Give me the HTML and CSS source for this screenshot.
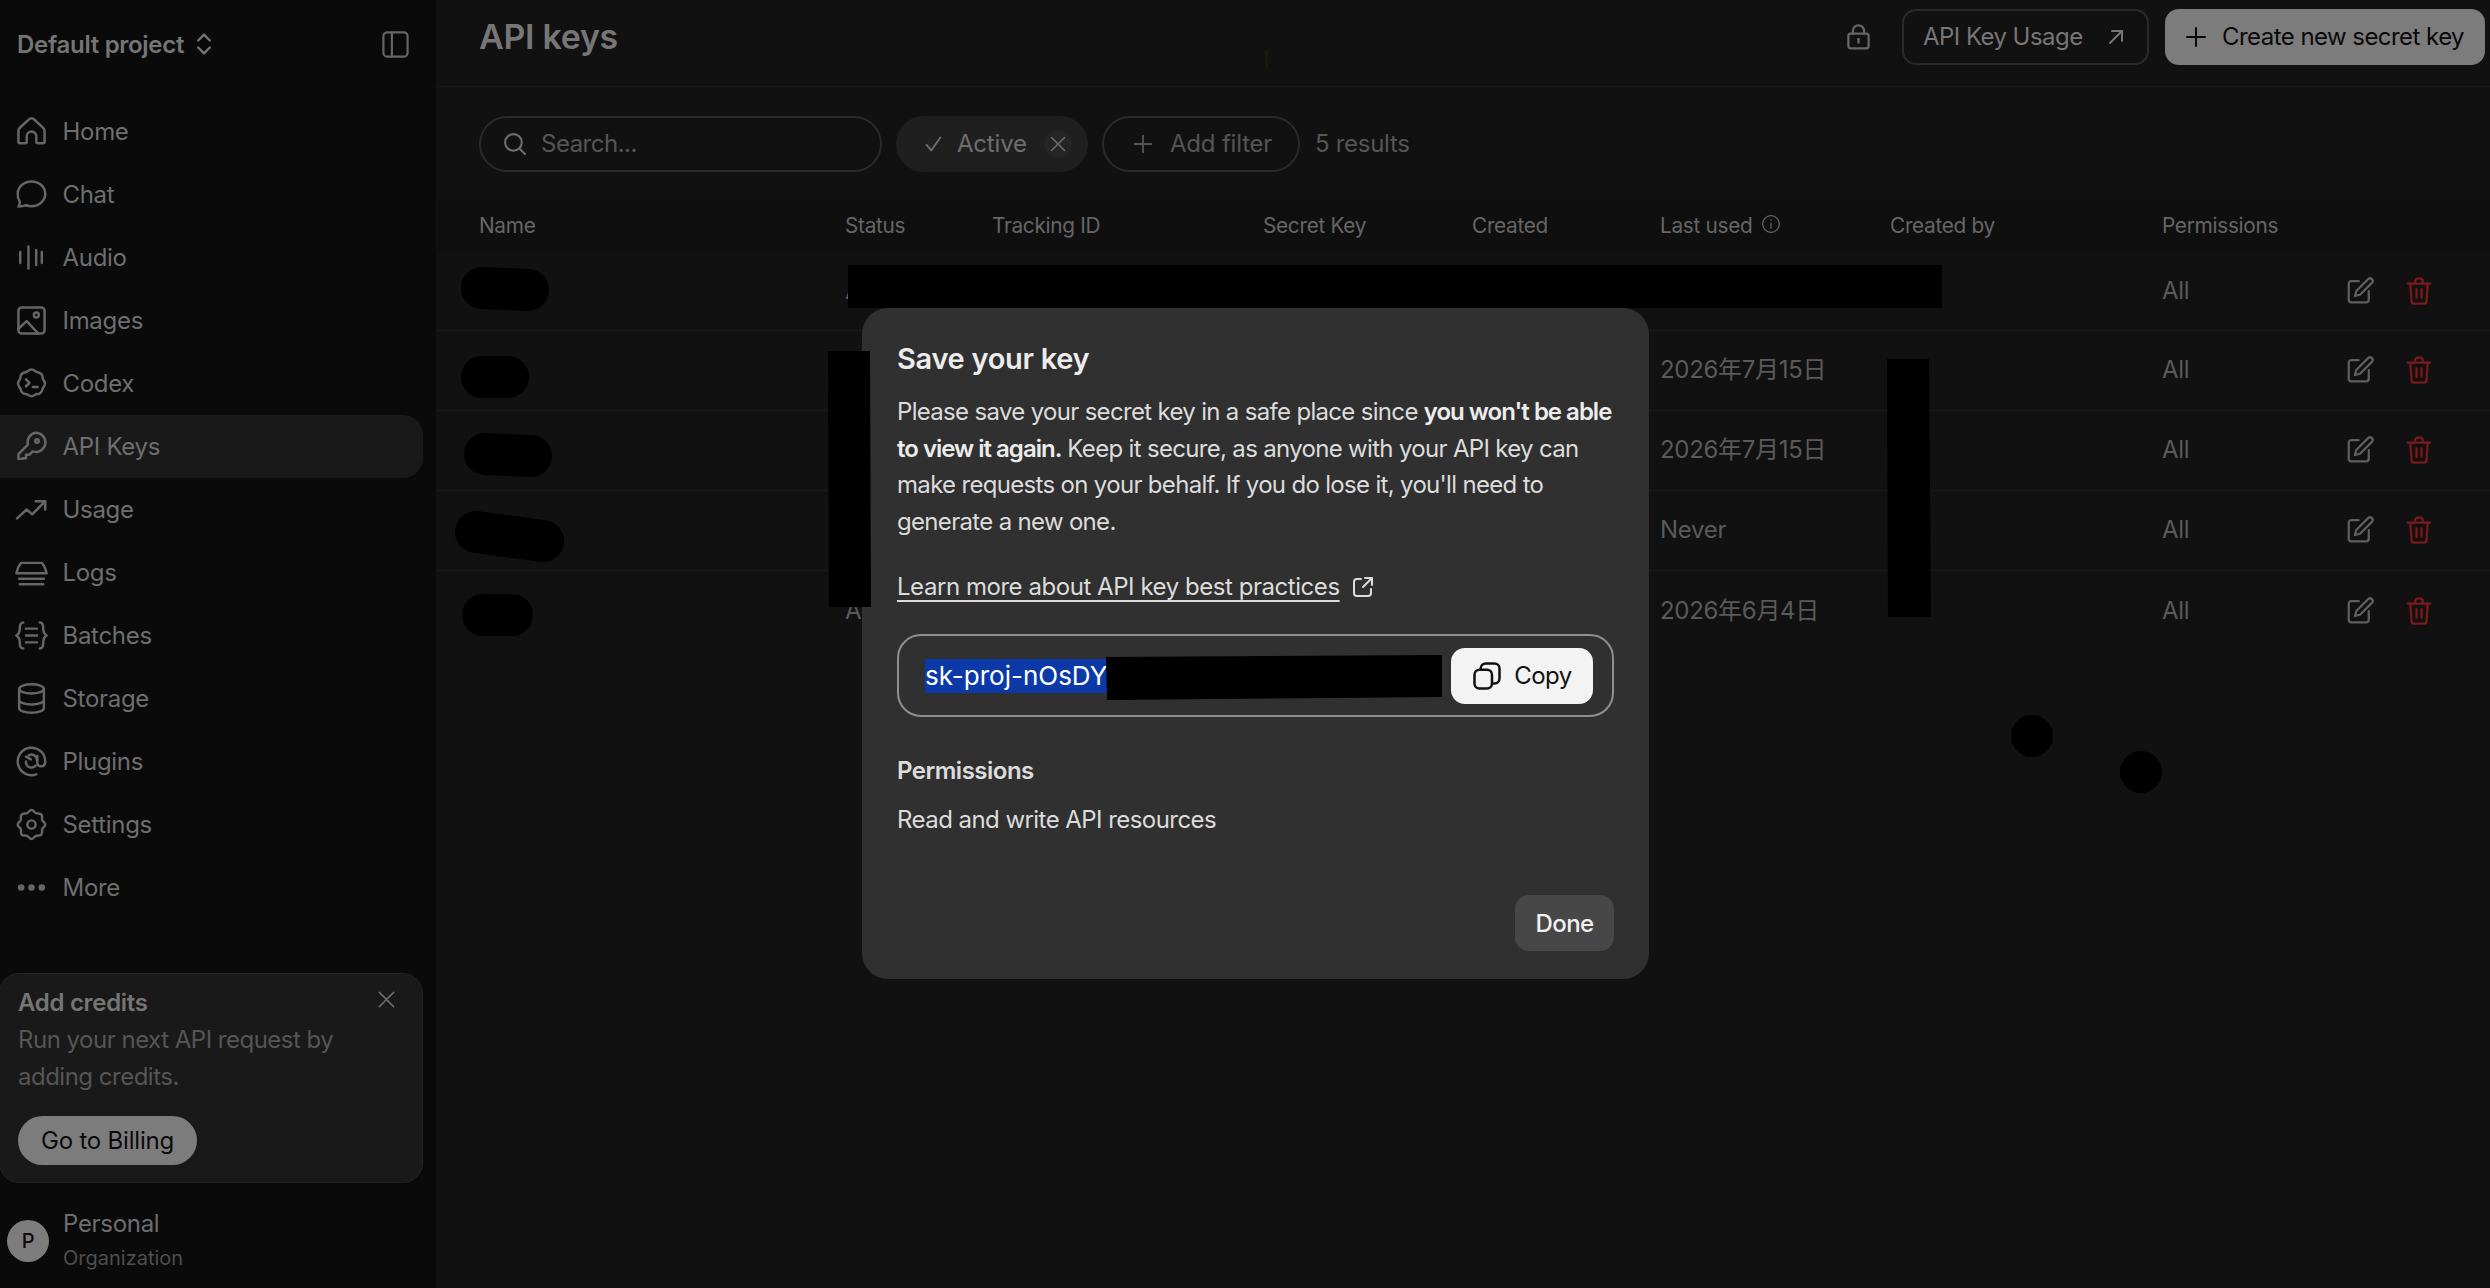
FILE: index.html
```html
<!DOCTYPE html>
<html lang="en">

<head>
  <meta charset="UTF-8">
  <title>API keys</title>
  <link rel="stylesheet" href="styles.css">
</head>

<body>
  <svg class="defs" width="0" height="0">
    <symbol id="i-edit" viewBox="0 0 24 24">
      <path d="M11 4H5a2 2 0 0 0-2 2v13a2 2 0 0 0 2 2h12a2 2 0 0 0 2-2v-7" />
      <path d="M18.500 2.500a2.100 2.100 0 0 1 3 3L12 15l-4 1 1-4z" />
    </symbol>
    <symbol id="i-trash" viewBox="0 0 24 24">
      <path d="M3 6h18M9 6V4a2 2 0 0 1 2-2h2a2 2 0 0 1 2 2v2M5 6l1 14a2 2 0 0 0 2 2h8a2 2 0 0 0 2-2l1-14M10 10.500v7M14 10.500v7" />
    </symbol>
  </svg>

  <div class="app">
    <aside class="sidebar">
      <div class="project">
        <span class="project-name">Default project</span>
        <svg class="icon chevrons" viewBox="0 0 24 24"><path d="M7 9l5-5 5 5M7 15l5 5 5-5" /></svg>
        <svg class="icon panel" viewBox="0 0 24 24"><rect x="2" y="2" width="20" height="20" rx="3" /><path d="M9 2v20" /></svg>
      </div>

      <nav class="nav">
        <a class="nav-item"><svg class="icon" viewBox="0 0 24 24"><path d="M2.500 19.500v-8a3 3 0 0 1 1-2.200l6.500-6a3 3 0 0 1 4 0l6.500 6a3 3 0 0 1 1 2.200v8a1 1 0 0 1-1 1h-4a1 1 0 0 1-1-1v-4a3.500 3.500 0 0 0-7 0v4a1 1 0 0 1-1 1h-4a1 1 0 0 1-1-1z" /></svg>Home</a>
        <a class="nav-item"><svg class="icon" viewBox="0 0 24 24"><path d="M12 2.500c5.500 0 10 3.900 10 9s-4.500 9-10 9a11 11 0 0 1-4-.7c-1.500.7-3.500 1-5.500 1 .8-1.200 1.100-2.400 1-3.600A8.500 8.500 0 0 1 2 11.500c0-5.100 4.500-9 10-9z" /></svg>Chat</a>
        <a class="nav-item"><svg class="icon" viewBox="0 0 24 24"><path d="M3.800 8v8M9.800 4v16M15.400 6.500v11M19.500 8v8" /></svg>Audio</a>
        <a class="nav-item"><svg class="icon" viewBox="0 0 24 24"><rect x="2.500" y="2.500" width="19" height="19" rx="2.500" /><circle cx="15.500" cy="8" r="1.800" /><path d="M2.500 18l6-5.500 8.500 9" /></svg>Images</a>
        <a class="nav-item"><svg class="icon" viewBox="0 0 24 24"><path d="M12 1.800c2 0 2.800 1.700 4.300 2 2 .4 3.800 1.500 3.700 3.700 0 1.500 1.500 2.500 1.800 4.200.2 2-1.300 2.800-1.800 4.300-.5 2-1.500 3.700-3.700 3.700-1.500 0-2.500 1.500-4.300 1.500s-2.800-1.500-4.300-1.500C5.500 19.500 4.500 18 4 16c-.5-1.500-2-2.300-1.800-4.300.2-1.700 1.800-2.700 1.800-4.200-.1-2.200 1.700-3.300 3.700-3.700 1.500-.3 2.300-2 4.300-2z" /><path d="M8 9l2.500 2.500L8 14M13 14.500h3.500" /></svg>Codex</a>
        <a class="nav-item active"><svg class="icon" viewBox="0 0 24 24"><path d="M15 2a7 7 0 1 1-2.200 13.600l-2.300 2.400H8v2.500H5.500v.5H2.500v-3.500l6.900-6.800A7 7 0 0 1 15 2z" /><circle cx="16" cy="8" r="1.300" /></svg>API Keys</a>
        <a class="nav-item"><svg class="icon" viewBox="0 0 24 24"><path d="M1.500 18.500l7-6.500 4 3.500 9-9M15 6h7v6" /></svg>Usage</a>
        <a class="nav-item"><svg class="icon" viewBox="0 0 24 24"><path d="M1 12.500c.5-2 2-6 3.500-7.500h15c1.500 1.500 3 5.500 3.500 7.500zM1.500 12.500h21M3 16.500h18M3.500 20.500h17" /></svg>Logs</a>
        <a class="nav-item"><svg class="icon" viewBox="0 0 24 24"><path d="M6 2.500c-2.500 0-2.500 2-2.500 4s0 4-2.500 5.500c2.500 1.500 2.500 3.500 2.500 5.500s0 4 2.500 4M18 2.500c2.500 0 2.500 2 2.500 4s0 4 2.500 5.500c-2.500 1.500-2.500 3.500-2.500 5.500s0 4-2.500 4M8 7h8M8 12h8M8 17h8" /></svg>Batches</a>
        <a class="nav-item"><svg class="icon" viewBox="0 0 24 24"><ellipse cx="12" cy="5" rx="9" ry="3.300" /><path d="M3 5v14c0 1.800 4 3.300 9 3.300s9-1.500 9-3.300V5M3 13c0 1.800 4 3.300 9 3.300s9-1.500 9-3.300" /></svg>Storage</a>
        <a class="nav-item"><svg class="icon" viewBox="0 0 24 24"><path d="M15.500 21.300A10 10 0 1 1 22 12c0 2.500-1.500 3.500-3 3.500s-2.800-1-2.800-3V8" /><path d="M8 8.500l3.500 2M8 12a4 4 0 0 0 7 3M16 11a4 4 0 0 0-6-3.500" /></svg>Plugins</a>
        <a class="nav-item"><svg class="icon" viewBox="0 0 24 24"><path d="M12 1.500c1.500 0 2 1.700 3.200 2.300 1.300.6 3-.3 4 1 1 1.200.2 2.800.6 4 .4 1 2.200 1.600 2.200 3.200s-1.800 2.200-2.200 3.200c-.4 1.200.4 2.800-.6 4-1 1.300-2.700.4-4 1-1.200.6-1.700 2.300-3.200 2.300s-2-1.700-3.200-2.300c-1.300-.6-3 .3-4-1-1-1.200-.2-2.800-.6-4C3.800 14.200 2 13.600 2 12s1.800-2.200 2.200-3.200c.4-1.200-.4-2.800.6-4 1-1.300 2.700-.4 4-1C10 3.200 10.500 1.500 12 1.500z" /><circle cx="12" cy="12" r="3" /></svg>Settings</a>
        <a class="nav-item"><svg class="icon" viewBox="0 0 24 24"><circle class="solid" cx="4.500" cy="12" r="2.400" /><circle class="solid" cx="12" cy="12" r="2.400" /><circle class="solid" cx="19.500" cy="12" r="2.400" /></svg>More</a>
      </nav>

      <div class="credits">
        <div class="credits-title">Add credits</div>
        <svg class="icon credits-close" viewBox="0 0 24 24"><path d="M3 3l18 18M21 3L3 21" /></svg>
        <p>Run your next API request by adding credits.</p>
        <button class="billing">Go to Billing</button>
      </div>

      <div class="org">
        <span class="avatar">P</span>
        <div>
          <div class="org-name">Personal</div>
          <div class="org-type">Organization</div>
        </div>
      </div>
    </aside>

    <main class="main">
      <header class="topbar">
        <h1>API keys</h1>
        <svg class="icon lock" viewBox="0 0 24 24"><rect x="3" y="9.500" width="18" height="13" rx="2" /><path d="M7 9.500V7a5 5 0 0 1 10 0v2.500M12 14.500v3" /><circle class="solid" cx="12" cy="14.500" r="1.200" /></svg>
        <button class="btn-outline">API Key Usage <svg class="icon" viewBox="0 0 24 24"><path d="M6 18L18 6M8 6h10v10" /></svg></button>
        <button class="btn-solid"><svg class="icon" viewBox="0 0 24 24"><path d="M12 3v18M3 12h18" /></svg>Create new secret key</button>
      </header>

      <div class="filters">
        <div class="search">
          <svg class="icon" viewBox="0 0 24 24"><circle cx="11" cy="11" r="8" /><path d="M17 17l5 5" /></svg>
          <span>Search...</span>
        </div>
        <div class="chip chip-active">
          <svg class="icon" viewBox="0 0 24 24"><path d="M5 13l5 6L20 5" /></svg>
          <span>Active</span>
          <svg class="icon chip-x" viewBox="-3 -3 30 30"><circle class="x-bg" cx="12" cy="12" r="15" /><path d="M5 5l14 14M19 5L5 19" /></svg>
        </div>
        <div class="chip chip-add">
          <svg class="icon" viewBox="0 0 24 24"><path d="M12 3v18M3 12h18" /></svg>
          <span>Add filter</span>
        </div>
        <span class="count">5 results</span>
      </div>

      <div class="table">
        <div class="row row-head">
          <span>Name</span><span>Status</span><span>Tracking ID</span><span>Secret Key</span><span>Created</span>
          <span class="last-used">Last used <svg class="icon" viewBox="0 0 24 24"><circle cx="12" cy="12" r="10" /><path d="M12 11v6M12 7v.5" /></svg></span>
          <span>Created by</span><span>Permissions</span><span></span>
        </div>
        <div class="row">
          <span></span><span>Active</span><span></span><span></span><span></span><span></span><span></span><span>All</span>
          <span class="actions"><svg class="icon"><use href="#i-edit" /></svg><svg class="icon del"><use href="#i-trash" /></svg></span>
        </div>
        <div class="row">
          <span></span><span>Active</span><span></span><span></span><span></span><span>2026年7月15日</span><span></span><span>All</span>
          <span class="actions"><svg class="icon"><use href="#i-edit" /></svg><svg class="icon del"><use href="#i-trash" /></svg></span>
        </div>
        <div class="row">
          <span></span><span>Active</span><span></span><span></span><span></span><span>2026年7月15日</span><span></span><span>All</span>
          <span class="actions"><svg class="icon"><use href="#i-edit" /></svg><svg class="icon del"><use href="#i-trash" /></svg></span>
        </div>
        <div class="row">
          <span></span><span>Active</span><span></span><span></span><span></span><span>Never</span><span></span><span>All</span>
          <span class="actions"><svg class="icon"><use href="#i-edit" /></svg><svg class="icon del"><use href="#i-trash" /></svg></span>
        </div>
        <div class="row row-last">
          <span></span><span>Active</span><span></span><span></span><span></span><span>2026年6月4日</span><span></span><span>All</span>
          <span class="actions"><svg class="icon"><use href="#i-edit" /></svg><svg class="icon del"><use href="#i-trash" /></svg></span>
        </div>
      </div>
    </main>
  </div>

  <div class="modal">
    <h2>Save your key</h2>
    <p class="modal-text">Please save your secret key in a safe place since <strong>you won't be able to view it again.</strong> Keep it secure, as anyone with your API key can make requests on your behalf. If you do lose it, you'll need to generate a new one.</p>
    <a class="modal-link"><span>Learn more about API key best practices</span> <svg class="icon" viewBox="0 0 24 24"><path d="M10 4H6a3 3 0 0 0-3 3v11a3 3 0 0 0 3 3h11a3 3 0 0 0 3-3v-4M14 3h7v7M21 3l-9 9" /></svg></a>
    <div class="key-box">
      <span class="key-value">sk-proj-nOsDY</span>
      <button class="copy"><svg class="icon" viewBox="0 0 24 24"><rect x="2" y="7" width="14" height="15" rx="4" /><path d="M7 7V6a4 4 0 0 1 4-4h7a4 4 0 0 1 4 4v8a4 4 0 0 1-4 4h-2" /></svg>Copy</button>
    </div>
    <h3>Permissions</h3>
    <p class="modal-perm">Read and write API resources</p>
    <div class="modal-foot"><button class="done">Done</button></div>
  </div>

  <!-- redaction marks painted over the screenshot -->
  <svg class="marks" width="2490" height="1288" viewBox="0 0 2490 1288">
    <g class="blobs">
      <path d="M482 288L528 290" />
      <path d="M482 377L508 377" />
      <path d="M485 454L531 456" />
      <path d="M476 532L543 541" />
      <path d="M483 615L512 615" />
    </g>
    <rect x="848" y="265" width="1094" height="43" />
    <path d="M828 351H870L871 607H829z" />
    <path d="M1887 359H1929L1931 617H1888z" />
    <path d="M1106 657L1442 655V697L1107 700z" />
    <circle cx="2032" cy="736" r="21" />
    <circle cx="2141" cy="772" r="21" />
    <rect x="1265" y="50" width="3" height="18" fill="#1a1a00" />
  </svg>
</body>

</html>
```

FILE: styles.css
```css
* {
  box-sizing: border-box;
}

html,
body {
  margin: 0;
  height: 100%;
  overflow: hidden;
}

body {
  font-family: Inter, "Noto Sans CJK SC", sans-serif;
  font-size: 24px;
  letter-spacing: -0.3px;
  background-color: #111;
  color: #6e6e6e;
}

button {
  font: inherit;
  letter-spacing: inherit;
  border: none;
  white-space: nowrap;
}

.defs {
  position: absolute;
}

.icon {
  width: 28px;
  height: 28px;
  flex: none;
  fill: none;
  stroke: currentColor;
  stroke-width: 2;
  stroke-linecap: round;
  stroke-linejoin: round;
}

.icon .solid {
  fill: currentColor;
  stroke: none;
}

.app {
  display: flex;
  height: 1288px;
}

/* sidebar */
.sidebar {
  width: 436px;
  flex: none;
  display: flex;
  flex-direction: column;
  background-color: #0a0a0a;
  padding-right: 13px;
}

.project {
  display: flex;
  align-items: center;
  height: 88px;
  padding-left: 17px;
  color: #757575;
}

.project-name {
  font-weight: 600;
  margin-right: 6px;
}

.chevrons {
  width: 28px;
  height: 28px;
}

.panel {
  margin-left: auto;
  width: 29px;
  height: 29px;
  margin-right: 13px;
  stroke-width: 1.800;
  color: #666;
}

.nav {
  display: flex;
  flex-direction: column;
  margin-top: 12px;
}

.nav-item {
  display: flex;
  align-items: center;
  gap: 15px;
  height: 63px;
  padding-left: 14.500px;
  border-radius: 0 20px 20px 0;
}

.nav-item .icon {
  width: 33px;
  height: 33px;
  stroke-width: 1.800;
  color: #666;
}

.nav-item.active {
  background-color: #191919;
}

.credits {
  position: relative;
  margin: auto 0 0 -1px;
  height: 210px;
  padding: 14px 18px;
  background-color: #191919;
  border: 1px solid #222;
  border-radius: 20px;
}

.credits-title {
  font-weight: 600;
  color: #757575;
}

.credits-close {
  position: absolute;
  top: 16px;
  right: 26px;
  width: 19px;
  height: 19px;
  stroke-width: 1.800;
}

.credits p {
  margin: 4px 0 21px;
  line-height: 37px;
  letter-spacing: -0.5px;
  color: #555;
}

.billing {
  width: 179px;
  height: 49px;
  padding: 0;
  border-radius: 25px;
  background-color: #7c7c7c;
  color: #0a0a0a;
  letter-spacing: -0.2px;
}

.org {
  display: flex;
  align-items: center;
  gap: 14px;
  height: 105px;
  padding-left: 7px;
}

.avatar {
  width: 42px;
  height: 42px;
  flex: none;
  display: flex;
  align-items: center;
  justify-content: center;
  margin-top: 10px;
  border-radius: 50%;
  background-color: #7c7c7c;
  color: #0a0a0a;
  font-size: 20px;
  font-weight: 500;
}

.org-name {
  margin-top: 8px;
}

.org-type {
  margin-top: 8px;
  font-size: 20px;
  letter-spacing: 0;
  color: #4e4e4e;
}

/* main */
.main {
  flex: 1;
  min-width: 0;
  padding-left: 1px;
}

.topbar {
  display: flex;
  align-items: center;
  height: 87px;
  padding: 0 5px 13px 42px;
  border-bottom: 1px solid #1a1a1a;
}

h1 {
  margin: 0 auto 0 0;
  font-size: 34px;
  font-weight: 600;
  letter-spacing: -0.3px;
  color: #767676;
}

.lock {
  width: 27px;
  height: 27px;
  margin-right: 30px;
  color: #666;
}

.btn-outline,
.btn-solid {
  display: flex;
  align-items: center;
  height: 56px;
  border-radius: 14px;
  letter-spacing: -0.55px;
}

.btn-outline {
  width: 247px;
  gap: 21px;
  padding: 0 19px;
  margin-right: 16px;
  background: none;
  border: 2px solid #2a2a2a;
  color: #767676;
}

.btn-outline .icon {
  width: 24px;
  height: 24px;
}

.btn-solid {
  width: 320px;
  gap: 14px;
  padding: 0 0 0 19px;
  background-color: #7c7c7c;
  color: #0a0a0a;
}

.btn-solid .icon {
  width: 24px;
  height: 24px;
}

.filters {
  display: flex;
  align-items: center;
  height: 113px;
  padding: 0 0 0 42px;
  gap: 14px;
}

.search,
.chip {
  display: flex;
  align-items: center;
  height: 56px;
  border-radius: 28px;
  border: 2px solid #2a2a2a;
  color: #555;
}

.search {
  width: 403px;
  gap: 14px;
  padding-left: 21px;
  letter-spacing: -0.5px;
}

.search .icon {
  width: 25px;
  height: 25px;
  color: #6e6e6e;
}

.chip-add {
  width: 198px;
  gap: 16px;
  padding-left: 28px;
  letter-spacing: -0.2px;
}

.chip-add .icon {
  width: 22px;
  height: 22px;
}

.chip-active {
  width: 192px;
  gap: 13px;
  padding-left: 24px;
  letter-spacing: -0.2px;
  background-color: #1f1f1f;
  border-color: #1f1f1f;
  color: #6e6e6e;
}

.chip-active .icon {
  width: 22px;
  height: 22px;
}

.chip-active .chip-x {
  width: 28px;
  height: 28px;
  margin-left: 4px;
  stroke-width: 1.600;
}

.x-bg {
  fill: #252525;
  stroke: none;
}

.count {
  margin-left: 1px;
  color: #555;
}

.row {
  display: grid;
  grid-template-columns: 366px 147px 271px 209px 188px 230px 272px 182.500px 1fr;
  align-items: center;
  height: 80px;
  padding-left: 42px;
  padding-bottom: 1px;
  line-height: 30px;
  border-bottom: 1px solid #1a1a1a;
  color: #5a5a5a;
}

.row-head {
  height: 52px;
  background-color: #0f0f0f;
  border-bottom: none;
  font-size: 20.800px;
  color: #666;
}

.row-head + .row {
  height: 79px;
}

.row-last {
  border-bottom: none;
}

.last-used {
  display: flex;
  align-items: center;
  gap: 8px;
}

.last-used .icon {
  width: 20px;
  height: 20px;
  stroke-width: 1.500;
  margin-top: -3px;
}

.actions {
  display: flex;
  gap: 29px;
}

.actions .icon {
  width: 30px;
  height: 30px;
  stroke-width: 1.800;
  color: #5f5f5f;
}

.actions .del {
  color: #7a1a1a;
}

/* modal */
.modal {
  position: absolute;
  left: 862px;
  top: 308px;
  width: 787px;
  height: 671px;
  padding: 33px 35px 0;
  background-color: #303030;
  border-radius: 26px;
  color: #dcdcdc;
  letter-spacing: -0.55px;
}

h2 {
  margin: 0;
  font-size: 29px;
  line-height: 36px;
  font-weight: 600;
  letter-spacing: -0.3px;
  color: #ececec;
}

.modal-text {
  margin: 17px 0 0;
  line-height: 36.600px;
  letter-spacing: -0.68px;
}

.modal-text strong {
  font-weight: 600;
  letter-spacing: -1px;
  color: #ececec;
}

.modal-link {
  display: flex;
  align-items: center;
  gap: 11px;
  margin-top: 28px;
  height: 37px;
  letter-spacing: -0.45px;
}

.modal-link span {
  text-decoration: underline;
  text-underline-offset: 5px;
  text-decoration-thickness: 2px;
}

.modal-link .icon {
  width: 24px;
  height: 24px;
}

.key-box {
  display: flex;
  align-items: center;
  justify-content: space-between;
  height: 83px;
  margin-top: 29px;
  padding: 0 19px 0 26px;
  border: 2px solid #8f8f8f;
  border-radius: 24px;
}

.key-value {
  height: 34px;
  font-size: 26px;
  line-height: 34px;
  letter-spacing: 0;
  background-color: #0b3aa8;
  color: #fff;
}

.copy {
  display: flex;
  align-items: center;
  justify-content: center;
  gap: 12px;
  width: 142px;
  height: 56px;
  border-radius: 14px;
  background-color: #f3f3f3;
  color: #111;
}

.copy .icon {
  width: 30px;
  height: 30px;
}

h3 {
  margin: 36px 0 0;
  font-size: 24px;
  line-height: 36px;
  font-weight: 600;
  letter-spacing: -0.5px;
  color: #dcdcdc;
}

.modal-perm {
  margin: 13px 0 0;
  line-height: 36px;
}

.modal-foot {
  display: flex;
  justify-content: flex-end;
  margin-top: 57px;
}

.done {
  width: 99px;
  height: 56px;
  border-radius: 14px;
  background-color: #474747;
  color: #f2f2f2;
  font-weight: 500;
}

/* redactions */
.marks {
  position: absolute;
  left: 0;
  top: 0;
  fill: #000;
}

.blobs path {
  fill: none;
  stroke: #000;
  stroke-width: 42;
  stroke-linecap: round;
}
```
